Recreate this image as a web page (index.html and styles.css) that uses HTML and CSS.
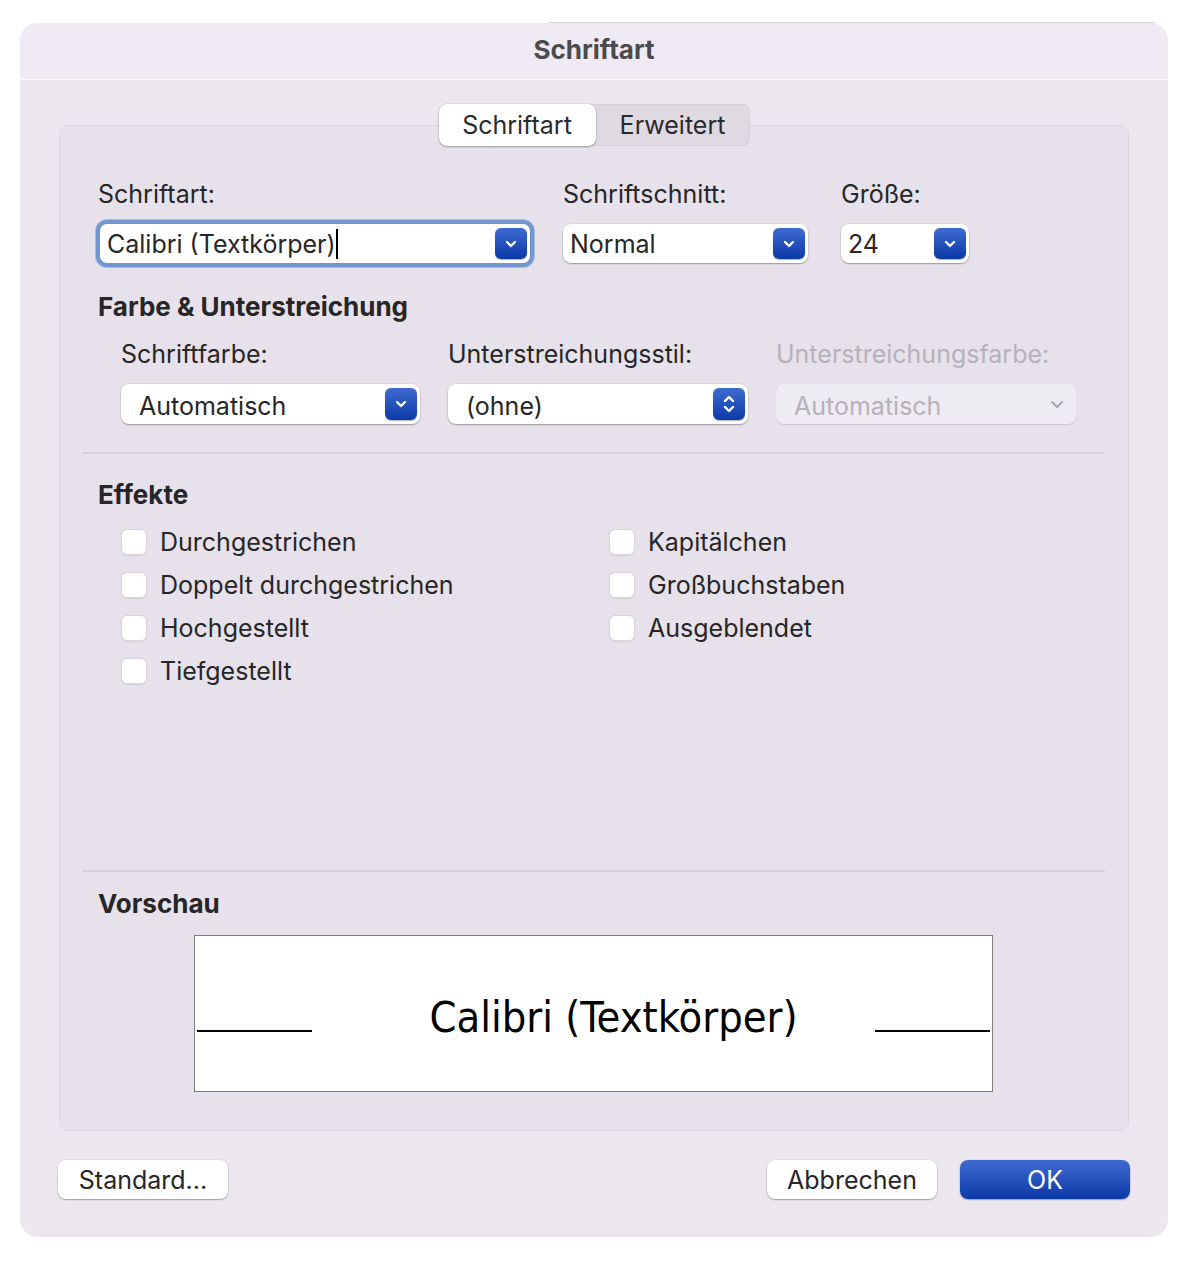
FILE: index.html
```html
<!DOCTYPE html>
<html lang="de">
<head>
  <meta charset="UTF-8" />
  <title>Schriftart</title>
  <link rel="stylesheet" href="styles.css">
</head>
<body>
  <div class="edge"></div>
  <div class="window">
    <div class="titlebar">Schriftart</div>

    <div class="content">
      <div class="tabs">
        <div class="tab active">Schriftart</div>
        <div class="tab">Erweitert</div>
      </div>

      <div class="panel">
        <div class="row row-font">
          <div class="field f-font">
            <div class="label">Schriftart:</div>
            <div class="popup combo focus">
              <span class="value">Calibri (Textkörper)<span class="caret"></span></span>
              <span class="arrow">
                <svg width="14" height="10" viewBox="0 0 14 10"><path d="M3 3l4 4 4-4" fill="none" stroke="#fff" stroke-width="2.4" stroke-linecap="round" stroke-linejoin="round"/></svg>
              </span>
            </div>
          </div>
          <div class="field f-style">
            <div class="label">Schriftschnitt:</div>
            <div class="popup">
              <span class="value">Normal</span>
              <span class="arrow">
                <svg width="14" height="10" viewBox="0 0 14 10"><path d="M3 3l4 4 4-4" fill="none" stroke="#fff" stroke-width="2.4" stroke-linecap="round" stroke-linejoin="round"/></svg>
              </span>
            </div>
          </div>
          <div class="field f-size">
            <div class="label">Größe:</div>
            <div class="popup">
              <span class="value">24</span>
              <span class="arrow">
                <svg width="14" height="10" viewBox="0 0 14 10"><path d="M3 3l4 4 4-4" fill="none" stroke="#fff" stroke-width="2.4" stroke-linecap="round" stroke-linejoin="round"/></svg>
              </span>
            </div>
          </div>
        </div>

        <h2 class="heading">Farbe &amp; Unterstreichung</h2>
        <div class="row row-color">
          <div class="field f-wide">
            <div class="label">Schriftfarbe:</div>
            <div class="popup tall">
              <span class="value">Automatisch</span>
              <span class="arrow">
                <svg width="14" height="10" viewBox="0 0 14 10"><path d="M3 3l4 4 4-4" fill="none" stroke="#fff" stroke-width="2.4" stroke-linecap="round" stroke-linejoin="round"/></svg>
              </span>
            </div>
          </div>
          <div class="field f-wide">
            <div class="label">Unterstreichungsstil:</div>
            <div class="popup tall">
              <span class="value">(ohne)</span>
              <span class="arrow">
                <svg width="14" height="22" viewBox="0 0 14 22"><path d="M3 8l4-4 4 4M3 14l4 4 4-4" fill="none" stroke="#fff" stroke-width="2.4" stroke-linecap="round" stroke-linejoin="round"/></svg>
              </span>
            </div>
          </div>
          <div class="field f-wide disabled">
            <div class="label">Unterstreichungsfarbe:</div>
            <div class="popup tall">
              <span class="value">Automatisch</span>
              <span class="arrow plain">
                <svg width="14" height="10" viewBox="0 0 14 10"><path d="M2 3l5 5 5-5" fill="none" stroke="#a9a4ad" stroke-width="2" stroke-linecap="round" stroke-linejoin="round"/></svg>
              </span>
            </div>
          </div>
        </div>

        <div class="separator"></div>

        <h2 class="heading">Effekte</h2>
        <div class="effects">
          <div class="col">
            <label class="check"><span class="box"></span>Durchgestrichen</label>
            <label class="check"><span class="box"></span>Doppelt durchgestrichen</label>
            <label class="check"><span class="box"></span>Hochgestellt</label>
            <label class="check"><span class="box"></span>Tiefgestellt</label>
          </div>
          <div class="col">
            <label class="check"><span class="box"></span>Kapitälchen</label>
            <label class="check"><span class="box"></span>Großbuchstaben</label>
            <label class="check"><span class="box"></span>Ausgeblendet</label>
          </div>
        </div>

        <div class="separator sep-preview"></div>

        <h2 class="heading">Vorschau</h2>
        <div class="preview">
          <span class="rule"></span>
          <span class="sample">Calibri (Textkörper)</span>
          <span class="rule"></span>
        </div>
      </div>

      <div class="buttons">
        <button class="btn">Standard...</button>
        <div class="spacer"></div>
        <button class="btn">Abbrechen</button>
        <button class="btn primary">OK</button>
      </div>
    </div>
  </div>
</body>
</html>
```

FILE: styles.css
```css
body {
  margin: 0;
  padding: 0;
  background: #fff;
  font-family: 'Inter', 'Liberation Sans', sans-serif;
  color: #262626;
}

.edge {
  height: 1px;
  margin: 22px 0 0 548px;
  width: 607px;
  background: #d6d6d6;
}

.window {
  margin-left: 20px;
  width: 1148px;
  height: 1214px;
  background: #ece7ef;
  border-radius: 18px;
  overflow: hidden;
}

.titlebar {
  height: 56px;
  line-height: 54px;
  text-align: center;
  font-size: 26px;
  font-weight: 700;
  color: #4b4a4d;
  background: #f0eaf5;
  border-bottom: 1px solid #fbf9fc;
}

.content {
  padding: 24px 38px 0;
}

.tabs {
  display: flex;
  width: 311px;
  height: 42px;
  margin: 0 auto -21px;
  background: #dfd9e2;
  border-radius: 8px;
  box-shadow: inset 0 0 0 1px #d6d0d9;
  position: relative;
}

.tab {
  flex: 1;
  text-align: center;
  line-height: 42px;
  font-size: 25px;
  color: #2a2a2a;
}

.tab.active {
  flex: 0 0 157px;
  background: #fff;
  border-radius: 8px;
  box-shadow: 0 1px 2px rgba(0, 0, 0, 0.3), 0 0 0 0.5px rgba(0, 0, 0, 0.1);
}

.panel {
  margin: 0 1px;
  height: 1006px;
  box-sizing: border-box;
  padding: 54px 0 0 38px;
  background: #e6e1ea;
  border: 1px solid #dcd7df;
  border-radius: 9px;
}

.row {
  display: flex;
}

.label {
  font-size: 25px;
  line-height: 28px;
  margin-bottom: 16px;
  white-space: nowrap;
}

.popup {
  display: flex;
  align-items: center;
  justify-content: space-between;
  height: 39px;
  box-sizing: border-box;
  padding: 0 3px 0 7px;
  background: #fff;
  border-radius: 8px;
  box-shadow: 0 1px 1.5px rgba(0, 0, 0, 0.3), 0 0 0 0.5px rgba(0, 0, 0, 0.08);
  font-size: 25px;
}

.popup.tall {
  height: 40px;
  margin-top: 1px;
  padding-left: 18px;
  padding-right: 3px;
}

.tall .value {
  padding-top: 3px;
}

.popup.focus {
  box-shadow: 0 0 0 4px #7296d0, 0 0 0 5px #a9bde0;
  border-radius: 7px;
}

.value {
  white-space: nowrap;
}

.caret {
  display: inline-block;
  width: 2px;
  height: 30px;
  background: #000;
  vertical-align: -6px;
}

.arrow {
  display: flex;
  align-items: center;
  justify-content: center;
  width: 32px;
  height: 31px;
  border-radius: 6px;
  background: linear-gradient(#3f6bd1, #0b39a6);
  box-shadow: 0 0.5px 1px rgba(0, 0, 0, 0.3);
}

.tall .arrow {
  height: 32px;
}

.arrow.plain {
  background: none;
  box-shadow: none;
}

.f-font {
  width: 432px;
}

.f-font .popup {
  margin-left: 2px;
}

.f-style {
  width: 245px;
  margin-left: 33px;
}

.f-size {
  width: 128px;
  margin-left: 33px;
}

.heading {
  margin: 0;
  font-size: 26px;
  line-height: 28px;
  font-weight: 700;
}

.row-font + .heading {
  margin-top: 30px;
}

.row-color {
  margin: 19px 0 0 23px;
}

.f-wide {
  width: 300px;
  margin-right: 28px;
}

.f-wide:first-child {
  width: 299px;
}

.disabled .label,
.disabled .value {
  color: #b6b1ba;
}

.disabled .popup {
  background: #efebf2;
  box-shadow: 0 0.5px 1px rgba(0, 0, 0, 0.12);
}

.separator {
  height: 2px;
  background: #d6d1d9;
  margin: 28px 23px 27px -16px;
}

.sep-preview {
  margin-top: 178px;
  margin-bottom: 18px;
}

.effects {
  display: flex;
  margin: 11px 0 0 23px;
}

.col {
  width: 488px;
}

.check {
  display: flex;
  align-items: center;
  height: 43px;
  font-size: 25px;
}

.box {
  width: 26px;
  height: 26px;
  box-sizing: border-box;
  margin-right: 13px;
  background: #fff;
  border: 1px solid #dad5dc;
  border-radius: 6px;
  box-shadow: 0 0.5px 1px rgba(0, 0, 0, 0.08);
}

.preview {
  display: flex;
  align-items: center;
  justify-content: space-between;
  width: 799px;
  height: 157px;
  box-sizing: border-box;
  margin: 17px 0 0 96px;
  padding: 0 2px;
  background: #fff;
  border: 1.5px solid #7c7c7c;
}

.rule {
  width: 115px;
  height: 2px;
  margin-top: 35px;
  background: #000;
}

.sample {
  margin: 6px 0 0 40px;
  font-family: 'DejaVu Sans Condensed', 'Open Sans', sans-serif;
  font-size: 43px;
  color: #000;
}

.buttons {
  display: flex;
  gap: 23px;
  margin-top: 29px;
}

.spacer {
  flex: 1;
}

.btn {
  width: 170px;
  height: 39px;
  font-family: inherit;
  font-size: 25px;
  color: #262626;
  background: #fff;
  border: none;
  border-radius: 8px;
  box-shadow: 0 1px 1.5px rgba(0, 0, 0, 0.3), 0 0 0 0.5px rgba(0, 0, 0, 0.08);
}

.btn.primary {
  color: #fff;
  background: linear-gradient(#3f6bd1, #0b39a6);
}
```
